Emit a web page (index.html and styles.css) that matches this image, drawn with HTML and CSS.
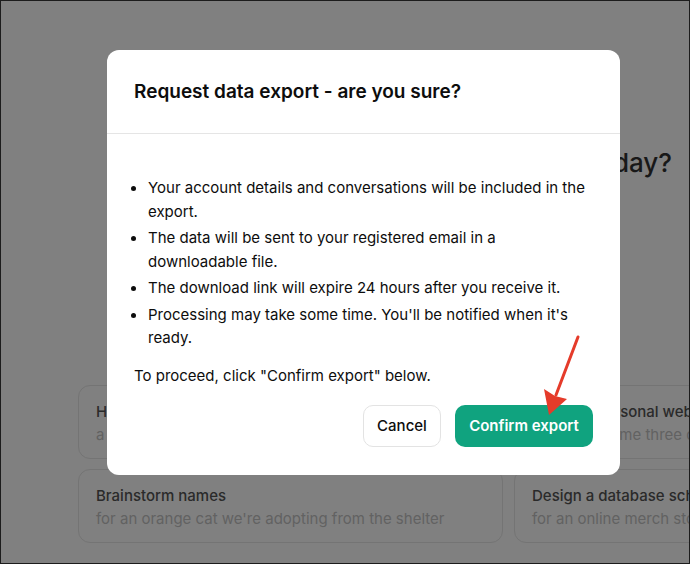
FILE: index.html
```html
<!DOCTYPE html>
<html lang="en">
<head>
    <meta charset="UTF-8">
    <meta name="viewport" content="width=device-width, initial-scale=1.0">
    <title>Request data export</title>
    <link rel="stylesheet" href="styles.css">
</head>
<body>
    <div class="screen">
        <div class="page">
            <div class="greeting">How can I help you today?</div>
            <div class="prompts">
                <div class="prompt">
                    <div class="prompt-title">Help me pick</div>
                    <div class="prompt-sub">a birthday gift for my mom who likes gardening</div>
                </div>
                <div class="prompt">
                    <div class="prompt-title">Create a personal webpage for me</div>
                    <div class="prompt-sub">after asking me three questions</div>
                </div>
                <div class="prompt">
                    <div class="prompt-title">Brainstorm names</div>
                    <div class="prompt-sub">for an orange cat we're adopting from the shelter</div>
                </div>
                <div class="prompt">
                    <div class="prompt-title">Design a database schema</div>
                    <div class="prompt-sub">for an online merch store</div>
                </div>
            </div>
        </div>

        <div class="modal">
            <div class="modal-header">Request data export - are you sure?</div>
            <div class="modal-body">
                <ul class="notes">
                    <li>Your account details and conversations will be included in the export.</li>
                    <li>The data will be sent to your registered email in a downloadable file.</li>
                    <li>The download link will expire 24 hours after you receive it.</li>
                    <li>Processing may take some time. You'll be notified when it's ready.</li>
                </ul>
                <p class="proceed">To proceed, click "Confirm export" below.</p>
                <div class="buttons">
                    <button class="cancel-button">Cancel</button>
                    <button class="confirm-button">Confirm export</button>
                </div>
            </div>
        </div>

        <svg class="arrow" width="690" height="564" viewBox="0 0 690 564">
            <line x1="578" y1="337" x2="556" y2="395" stroke="#e53b2a" stroke-width="3" stroke-linecap="round"/>
            <polygon points="544,389 555,396 567,399 549,415" fill="#e53b2a"/>
        </svg>
    </div>
</body>
</html>
```

FILE: styles.css
```css
body { margin: 0; font-family: Inter, "Liberation Sans", sans-serif; }
.screen { position: relative; width: 690px; height: 564px; box-sizing: border-box; border: 1px solid #1c1c1c; background: #808080; overflow: hidden; }
.page { padding-left: 77px; }
.greeting { display: flex; justify-content: flex-end; padding: 144px 17px 0 0; font-size: 26px; line-height: 36px; font-weight: 500; color: #181818; white-space: nowrap; }
.prompts { display: grid; grid-template-columns: 425px 425px; grid-auto-rows: 74px; gap: 10px 11px; margin-top: 204px; }
.prompt { border: 1px solid #747474; border-radius: 12px; padding: 14px 17px 12px; white-space: nowrap; overflow: hidden; }
.prompt-title { font-size: 15px; line-height: 23px; font-weight: 500; color: #2a2a2a; }
.prompt-sub { font-size: 15px; line-height: 23px; color: #626262; }

.modal { position: absolute; left: 106px; top: 49px; width: 513px; background: #fff; border-radius: 12px; color: #0d0d0d; }
.modal-header { padding: 24px 27px; font-size: 19px; line-height: 35px; font-weight: 600; border-bottom: 1px solid #e5e5e5; }
.modal-body { padding: 42px 27px 28px 27px; font-size: 15px; }
.notes { list-style: none; margin: 0; padding: 0; }
.notes li { display: flex; line-height: 23.5px; margin-bottom: 3px; }
.notes li:last-child { margin-bottom: 0; }
.notes li::before { content: ""; flex: none; width: 5px; height: 5px; border-radius: 50%; background: #0d0d0d; margin: 10px 12px 0 -3px; }
.proceed { margin: 14px 0 0 0; line-height: 24px; }
.buttons { display: flex; justify-content: flex-end; gap: 14px; margin-top: 17px; }
.cancel-button, .confirm-button { height: 42px; border-radius: 10px; font-family: inherit; font-size: 15px; font-weight: 500; padding: 0 10px; }
.cancel-button { width: 78px; background: #fff; border: 1px solid #e3e3e3; color: #0d0d0d; }
.confirm-button { width: 138px; background: #10a37f; border: none; color: #fff; font-weight: 600; }
.arrow { position: absolute; left: -1px; top: -1px; pointer-events: none; }
```
